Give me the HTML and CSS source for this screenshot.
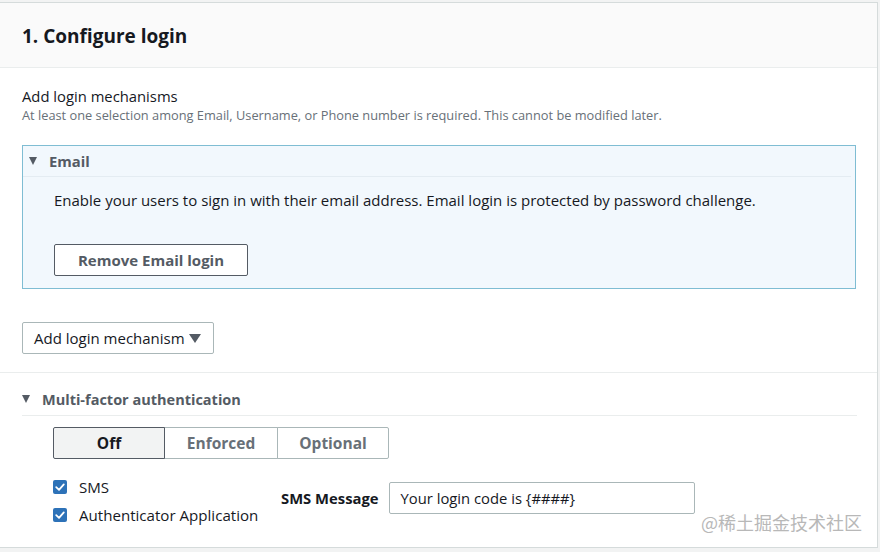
FILE: index.html
```html
<!DOCTYPE html>
<html>
<head>
<meta charset="utf-8">
<link rel="stylesheet" href="styles.css">
</head>
<body>
<div class="card">
  <div class="card-header"><h2 class="title">1. Configure login</h2></div>
  <div class="section">
    <div class="label">Add login mechanisms</div>
    <div class="desc">At least one selection among Email, Username, or Phone number is required. This cannot be modified later.</div>
    <div class="email-box">
      <div class="exp-head"><span class="caret"></span><span>Email</span></div>
      <div class="email-body">
        <p class="email-text">Enable your users to sign in with their email address. Email login is protected by password challenge.</p>
        <button class="btn btn-bold">Remove Email login</button>
      </div>
    </div>
    <button class="btn btn-add">Add login mechanism <span class="caret caret-dark"></span></button>
  </div>
  <div class="mfa">
    <div class="mfa-head"><span class="caret"></span><span>Multi-factor authentication</span></div>
    <div class="mfa-body">
      <div class="seg">
        <div class="seg-item active">Off</div>
        <div class="seg-item">Enforced</div>
        <div class="seg-item">Optional</div>
      </div>
      <div class="opts">
        <div class="checks">
          <label class="check"><span class="box"><svg viewBox="0 0 14 14" width="14" height="14"><path d="M3.2 7.2 L6 9.8 L10.8 4.4" fill="none" stroke="#fff" stroke-width="1.8" stroke-linecap="round" stroke-linejoin="round"/></svg></span>SMS</label>
          <label class="check"><span class="box"><svg viewBox="0 0 14 14" width="14" height="14"><path d="M3.2 7.2 L6 9.8 L10.8 4.4" fill="none" stroke="#fff" stroke-width="1.8" stroke-linecap="round" stroke-linejoin="round"/></svg></span>Authenticator Application</label>
        </div>
        <div class="sms">
          <span class="sms-label">SMS Message</span>
          <div class="input">Your login code is {####}</div>
        </div>
      </div>
    </div>
  </div>
  <div class="watermark">@稀土掘金技术社区</div>
</div>
</body>
</html>
```
FILE: styles.css
```css
* { box-sizing: border-box; }
html, body { margin: 0; padding: 0; }
body {
  background: #f2f3f3;
  font-family: "Open Sans", "Noto Sans CJK SC", sans-serif;
  color: #16191f;
  padding-top: 2px;
}
.card {
  position: relative;
  width: 878px;
  height: 546px;
  background: #fff;
  border: 1px solid #d5dbdb;
  border-left: none;
}
.card-header {
  height: 65px;
  background: #fafafa;
  border-bottom: 1px solid #eaeded;
  display: flex;
  align-items: center;
  padding-left: 22px;
  padding-top: 1px;
}
.title {
  margin: 0;
  font-size: 19px;
  font-weight: 700;
  color: #16191f;
}
.section {
  padding: 18px 21px 18px 22px;
  border-bottom: 1px solid #eaeded;
}
.label { font-size: 14.8px; line-height: 20px; }
.desc { font-size: 12.8px; line-height: 16px; color: #687078; margin-top: 1px; }
.email-box {
  margin-top: 22px;
  border: 1px solid #7fbdd3;
  background: #f2f8fd;
  padding-bottom: 12px;
}
.exp-head {
  height: 31px;
  display: flex;
  align-items: center;
  padding-left: 6px;
  margin-right: 4px;
  border-bottom: 1px solid #e4ecf2;
  font-size: 14.8px;
  font-weight: 700;
  color: #545b64;
  gap: 12px;
}
.caret {
  display: inline-block;
  width: 0; height: 0;
  border-left: 4.5px solid transparent;
  border-right: 4.5px solid transparent;
  border-top: 8px solid #545b64;
}
.email-body { padding: 13px 0 0 31px; }
.email-text { margin: 0; font-size: 15px; line-height: 20px; }
.btn {
  font-family: inherit;
  background: #fff;
  border: 1px solid #545b64;
  border-radius: 2px;
  height: 32px;
  color: #545b64;
  font-size: 15px;
  display: flex;
  align-items: center;
  justify-content: center;
  padding: 0;
}
.btn-bold { font-weight: 700; width: 194px; margin-top: 34px; }
.btn-add {
  margin-top: 33px;
  width: 192px;
  color: #16191f;
  border-color: #aab7b8;
  gap: 4px;
  justify-content: flex-start;
  padding-left: 11px;
}
.caret-dark { border-top-color: #545b64; border-left-width: 6px; border-right-width: 6px; border-top-width: 9px; }
.mfa { padding: 0 20px 0 22px; }
.mfa-head {
  height: 43px;
  padding-top: 10px;
  display: flex;
  align-items: center;
  gap: 12px;
  font-size: 14.5px;
  font-weight: 700;
  color: #545b64;
  border-bottom: 1px solid #eaeded;
}
.mfa-body { padding: 11px 0 0 31px; }
.seg { display: flex; height: 32px; }
.seg-item {
  display: flex; align-items: center; justify-content: center;
  border: 1px solid #aab7b8;
  margin-left: -1px;
  font-size: 15.5px;
  font-weight: 700;
  color: #687078;
  width: 114px;
  background: #fff;
}
.seg-item:first-child { margin-left: 0; width: 112px; border-radius: 2px 0 0 2px; }
.seg-item:last-child { width: 112px; border-radius: 0 2px 2px 0; }
.seg-item.active { background: #f2f3f3; border-color: #545b64; color: #16191f; position: relative; z-index: 1; }
.opts { display: flex; align-items: flex-start; margin-top: 18px; }
.checks { display: flex; flex-direction: column; gap: 8px; width: 228px; }
.check { display: flex; align-items: center; gap: 12px; font-size: 15.1px; line-height: 20px; }
.box {
  width: 14px; height: 14px; border-radius: 2px; background: #2d72b8;
  display: inline-flex;
}
.sms { display: flex; align-items: center; gap: 10px; margin-top: 5px; }
.sms-label { font-size: 14.8px; font-weight: 700; }
.input {
  width: 306px; height: 32px;
  border: 1px solid #aab7b8;
  border-radius: 2px;
  display: flex; align-items: center;
  padding-left: 11px;
  font-size: 14.8px;
}
.watermark {
  position: absolute;
  right: 15px;
  bottom: 12px;
  font-size: 18px;
  color: #b8b8b8;
  font-family: "Noto Sans CJK SC", sans-serif;
}
```
